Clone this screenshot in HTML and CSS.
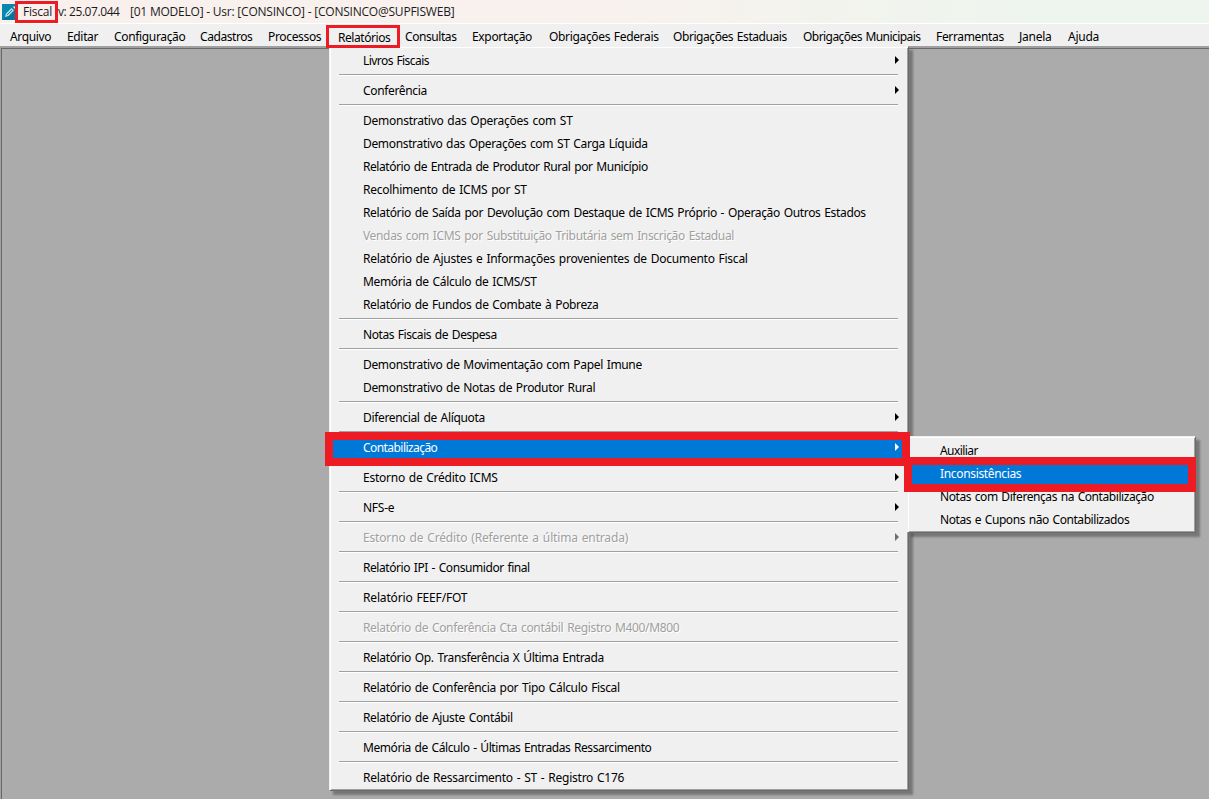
FILE: index.html
```
<!DOCTYPE html>
<html lang="pt-BR">
<head>
    <meta charset="UTF-8">
    <title>Fiscal</title>
    <link rel="stylesheet" href="styles.css">
</head>
<body>
    <div class="titleBar">
        <svg class="appIcon" width="14" height="16" viewBox="0 0 14 16">
            <rect width="14" height="16" fill="#0788ad"/>
            <path d="M0 16L14 5V16Z" fill="#04779c"/>
            <path d="M3 13L4 9.5L9.5 4L12 6.5L6.5 12Z" fill="#b9dce8"/>
            <path d="M5 11L10 6M10.5 3.5L12.5 5.5" stroke="#0788ad" stroke-width="1"/>
            <path d="M11 3L12 2L14 4L13 5Z" fill="#d8edf3"/>
        </svg>
        <span class="appName">Fiscal</span>
        <span class="version">v: 25.07.044</span>
        <span class="session">[01 MODELO] - Usr: [CONSINCO] - [CONSINCO@SUPFISWEB]</span>
        <div class="mark markTitle"></div>
    </div>

    <div class="menuBar">
        <span>Arquivo</span>
        <span>Editar</span>
        <span>Configuração</span>
        <span class="tight">Cadastros</span>
        <span>Processos</span>
        <span class="open tight">Relatórios</span>
        <span class="tight">Consultas</span>
        <span>Exportação</span>
        <span>Obrigações Federais</span>
        <span class="tight">Obrigações Estaduais</span>
        <span class="tighter">Obrigações Municipais</span>
        <span>Ferramentas</span>
        <span class="loose">Janela</span>
        <span class="loose">Ajuda</span>
        <div class="mark markMenu"></div>
    </div>

    <div class="workspace"></div>

    <div class="menu mainMenu">
        <div class="item sub tighter"><span>Livros Fiscais</span></div>
        <div class="sep"></div>
        <div class="item sub"><span>Conferência</span></div>
        <div class="sep"></div>
        <div class="item loose"><span>Demonstrativo das Operações com ST</span></div>
        <div class="item"><span>Demonstrativo das Operações com ST Carga Líquida</span></div>
        <div class="item tight"><span>Relatório de Entrada de Produtor Rural por Município</span></div>
        <div class="item loose"><span>Recolhimento de ICMS por ST</span></div>
        <div class="item"><span>Relatório de Saída por Devolução com Destaque de ICMS Próprio - Operação Outros Estados</span></div>
        <div class="item disabled"><span>Vendas com ICMS por Substituição Tributária sem Inscrição Estadual</span></div>
        <div class="item loose"><span>Relatório de Ajustes e Informações provenientes de Documento Fiscal</span></div>
        <div class="item"><span>Memória de Cálculo de ICMS/ST</span></div>
        <div class="item"><span>Relatório de Fundos de Combate à Pobreza</span></div>
        <div class="sep"></div>
        <div class="item tight"><span>Notas Fiscais de Despesa</span></div>
        <div class="sep"></div>
        <div class="item"><span>Demonstrativo de Movimentação com Papel Imune</span></div>
        <div class="item"><span>Demonstrativo de Notas de Produtor Rural</span></div>
        <div class="sep"></div>
        <div class="item sub"><span>Diferencial de Alíquota</span></div>
        <div class="sep"></div>
        <div class="item sub selected tighter"><span>Contabilização</span></div>
        <div class="sep"></div>
        <div class="item sub loose"><span>Estorno de Crédito ICMS</span></div>
        <div class="sep"></div>
        <div class="item sub loose"><span>NFS-e</span></div>
        <div class="sep"></div>
        <div class="item sub disabled looser"><span>Estorno de Crédito (Referente a última entrada)</span></div>
        <div class="sep"></div>
        <div class="item tight"><span>Relatório IPI - Consumidor final</span></div>
        <div class="sep"></div>
        <div class="item looser"><span>Relatório FEEF/FOT</span></div>
        <div class="sep"></div>
        <div class="item disabled"><span>Relatório de Conferência Cta contábil Registro M400/M800</span></div>
        <div class="sep"></div>
        <div class="item"><span>Relatório Op. Transferência X Última Entrada</span></div>
        <div class="sep"></div>
        <div class="item"><span>Relatório de Conferência por Tipo Cálculo Fiscal</span></div>
        <div class="sep"></div>
        <div class="item"><span>Relatório de Ajuste Contábil</span></div>
        <div class="sep"></div>
        <div class="item tight"><span>Memória de Cálculo - Últimas Entradas Ressarcimento</span></div>
        <div class="sep"></div>
        <div class="item loose"><span>Relatório de Ressarcimento - ST - Registro C176</span></div>
    </div>

    <div class="menu subMenu">
        <div class="item tighter"><span>Auxiliar</span></div>
        <div class="item selected"><span>Inconsistências</span></div>
        <div class="item tight"><span>Notas com Diferenças na Contabilização</span></div>
        <div class="item tight"><span>Notas e Cupons não Contabilizados</span></div>
    </div>

    <div class="mark markItem"></div>
    <div class="mark markSubItem"></div>
</body>
</html>
```
FILE: styles.css
```
* {
    box-sizing: border-box;
}
body {
    margin: 0;
    width: 1209px;
    height: 799px;
    overflow: hidden;
    display: flex;
    flex-direction: column;
    font-family: 'Noto Sans', sans-serif;
    font-size: 12px;
    letter-spacing: -0.34px;
    word-spacing: 1px;
    color: #000;
    white-space: nowrap;
}
.titleBar {
    position: relative;
    height: 23px;
    display: flex;
    align-items: center;
    padding-left: 2px;
    background: linear-gradient(90deg, #f9f0ee 0, #f8f1ed 50%, #eef5ee 85%);
    font-family: 'Open Sans', sans-serif;
    letter-spacing: -0.22px;
    word-spacing: 0;
    color: #1b1b1b;
}
.appIcon {
    margin-right: 7px;
}
.appName {
    width: 35px;
}
.version {
    width: 72px;
    letter-spacing: -0.42px;
}
.menuBar {
    position: relative;
    height: 23px;
    border-top: 1px solid #fff;
    padding-left: 10px;
    background: #f0f0f0;
    display: grid;
    grid-template-columns: 57px 47px 86px 68px 70px 67px 67px 77px 124px 130px 133px 83px 49px 60px;
    line-height: 25px;
}
.menuBar .open {
    line-height: 27px;
}
.workspace {
    flex: 1;
    background: #ababab;
    border-top: 2px solid #a0a0a0;
    border-left: 1px solid #a0a0a0;
    box-shadow: inset 1px 1px 0 #696969;
}
.menu {
    position: absolute;
    background: #f0f0f0;
    border: 1px solid #f0f0f0;
    border-right-color: #696969;
    border-bottom-color: #696969;
    box-shadow: inset 1px 1px 0 #fff, inset -1px -1px 0 #a0a0a0, 4px 4px 2px rgba(0, 0, 0, 0.3);
}
.mainMenu {
    left: 329px;
    top: 46px;
    width: 580px;
    height: 745px;
    padding: 2px 2px 0;
}
.subMenu {
    left: 907px;
    top: 436px;
    width: 289px;
    height: 97px;
    padding: 2px 2px 0;
}
.item {
    position: relative;
    height: 23px;
    line-height: 23px;
    padding-left: 31px;
}
.subMenu .item {
    padding-left: 30px;
}
.sep {
    height: 7px;
    margin: 0 8px 0 7px;
    padding-top: 2px;
}
.sep::before {
    content: '';
    display: block;
    border-top: 1px solid #a0a0a0;
    border-bottom: 1px solid #fff;
}
.sub::after {
    content: '';
    position: absolute;
    right: 7px;
    top: 7px;
    border-left: 4px solid #000;
    border-top: 4px solid transparent;
    border-bottom: 4px solid transparent;
}
.disabled {
    color: #a0a0a0;
    text-shadow: 1px 1px 0 #fff;
}
.disabled::after {
    border-left-color: #6d6d6d;
}
.selected {
    background: #0078d7;
    color: #fff;
}
.selected::after {
    border-left-color: #fff;
}
.tighter {
    letter-spacing: -0.56px;
}
.tight {
    letter-spacing: -0.43px;
}
.loose {
    letter-spacing: -0.25px;
}
.looser {
    letter-spacing: -0.16px;
}
/* red highlight frames */
.mark {
    position: absolute;
    border: 8px solid #ed1c24;
}
.markTitle {
    left: 15px;
    top: 1px;
    width: 43px;
    height: 22px;
    border-width: 3px;
}
.markMenu {
    left: 326px;
    top: 1px;
    width: 74px;
    height: 23px;
    border-width: 3px;
    z-index: 1;
}
.markItem {
    left: 325px;
    top: 432px;
    width: 585px;
    height: 34px;
}
.markSubItem {
    left: 904px;
    top: 457px;
    width: 292px;
    height: 35px;
}
```
